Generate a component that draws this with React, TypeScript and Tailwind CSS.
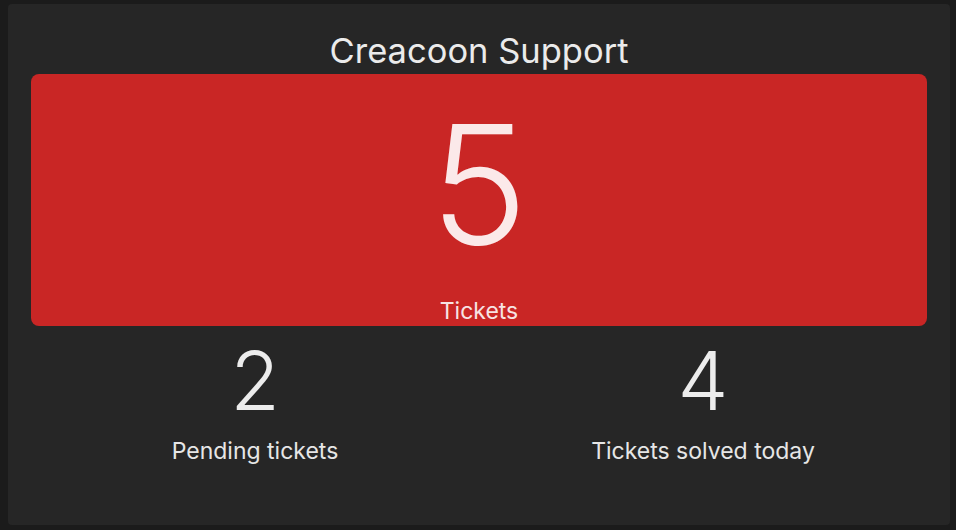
import React from "react";

const font = { fontFamily: "Inter, 'Noto Sans', sans-serif" };

export default function App() {
  return (
    <div
      className="w-[956px] h-[530px] bg-[#1b1b1b] pt-[4px] pl-[8px] pr-[6px] pb-[5px]"
      style={font}
    >
      <div className="h-full rounded bg-[#262626] px-[23px] pt-[26px] flex flex-col items-center">
        <div className="text-[34.5px] leading-[42px] text-[#ebebeb] mb-[2px]">Creacoon Support</div>
        <div className="w-full h-[252px] rounded-lg bg-[#c92625] flex flex-col items-center pt-[28px]">
          <div className="text-[165px] leading-none font-light text-[#fbe9e9]">5</div>
          <div className="mt-[30px] text-[23px] leading-[28px] text-[#f7e3e3]">Tickets</div>
        </div>
        <div className="w-full grid grid-cols-2 pt-[15px]">
          <div className="flex flex-col items-center">
            <div className="text-[81px] leading-none font-light text-[#ececec]">2</div>
            <div className="mt-[15px] text-[23px] leading-[28px] text-[#e6e6e6]">Pending tickets</div>
          </div>
          <div className="flex flex-col items-center">
            <div className="text-[81px] leading-none font-light text-[#ececec]">4</div>
            <div className="mt-[15px] text-[23px] leading-[28px] text-[#e6e6e6]">Tickets solved today</div>
          </div>
        </div>
      </div>
    </div>
  );
}
